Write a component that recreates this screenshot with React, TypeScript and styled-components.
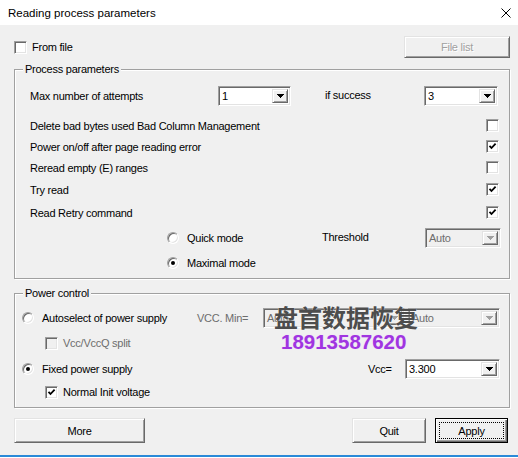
import styled, { createGlobalStyle } from "styled-components"

const GlobalStyle = createGlobalStyle`
  html, body {
    margin: 0;
    padding: 0;
    background: #ffffff;
  }
  body {
    font-family: "Liberation Sans", Arial, sans-serif;
    font-size: 11px;
    letter-spacing: -0.25px;
    color: #000;
  }
  * {
    box-sizing: border-box;
  }
`

const Window = styled.div`
  width: 518px;
  height: 458px;
  display: flex;
  flex-direction: column;
  background: #f0f0f0;
  overflow: hidden;
`

const TitleBar = styled.div`
  flex: none;
  height: 25px;
  background: #ffffff;
  display: flex;
  align-items: center;
  justify-content: space-between;
  padding: 0 7px 0 8px;
  font-size: 11.5px;
  letter-spacing: 0;
`

const Content = styled.div`
  flex: 1;
  display: flex;
  flex-direction: column;
  padding: 11px 8px 0 14px;
`

const BottomEdge = styled.div`
  flex: none;
  height: 3px;
  border-top: 2px solid #2a8ad8;
  background: #ffffff;
`

const TopRow = styled.div`
  height: 22px;
  display: flex;
  align-items: center;
  justify-content: space-between;
`

const Group = styled.div<{ $h: number; $mt: number; $pad: string }>`
  position: relative;
  height: ${(p) => p.$h}px;
  margin-top: ${(p) => p.$mt}px;
  padding: ${(p) => p.$pad};
  border: 1px solid #a0a0a0;
  box-shadow: inset 1px 1px 0 #ffffff, 1px 1px 0 #ffffff;
  display: flex;
  flex-direction: column;
`

const Legend = styled.span`
  position: absolute;
  top: -7px;
  left: 8px;
  padding: 0 2px;
  line-height: 13px;
  background: #f0f0f0;
`

const Row = styled.div<{ $h: number; $mt?: number; $indent?: number }>`
  flex: none;
  display: flex;
  align-items: center;
  height: ${(p) => p.$h}px;
  margin-top: ${(p) => p.$mt ?? 0}px;
  padding-left: ${(p) => p.$indent ?? 0}px;
`

const Cell = styled.span<{ $w?: number; $muted?: boolean; $up?: number }>`
  flex: ${(p) => (p.$w ? "none" : "1")};
  width: ${(p) => (p.$w ? `${p.$w}px` : "auto")};
  display: flex;
  align-items: center;
  gap: 8px;
  white-space: nowrap;
  color: ${(p) => (p.$muted ? "#6d6d6d" : "#000")};
  margin-bottom: ${(p) => (p.$up ?? 0) * 2}px;
`

const CheckLabel = styled.label<{ $muted?: boolean }>`
  display: flex;
  align-items: center;
  gap: 5px;
  white-space: nowrap;
  color: ${(p) => (p.$muted ? "#6d6d6d" : "#000")};
`

const sunken = `
  border: 1px solid;
  border-color: #a0a0a0 #ffffff #ffffff #a0a0a0;
  box-shadow: inset 1px 1px 0 #696969, inset -1px -1px 0 #e3e3e3;
`

const raised = `
  border: 1px solid;
  border-color: #e3e3e3 #696969 #696969 #e3e3e3;
  box-shadow: inset 1px 1px 0 #ffffff, inset -1px -1px 0 #a0a0a0;
`

const Box = styled.span<{ $disabled?: boolean }>`
  flex: none;
  width: 13px;
  height: 13px;
  display: inline-flex;
  align-items: center;
  justify-content: center;
  background: ${(p) => (p.$disabled ? "#f0f0f0" : "#ffffff")};
  ${sunken}
`

const RadioDot = styled.span<{ $checked?: boolean }>`
  flex: none;
  position: relative;
  width: 12px;
  height: 12px;
  border-radius: 50%;
  background: #ffffff;
  ${sunken}

  &::after {
    content: "";
    display: ${(p) => (p.$checked ? "block" : "none")};
    position: absolute;
    left: 3px;
    top: 3px;
    width: 4px;
    height: 4px;
    border-radius: 50%;
    background: #000;
  }
`

const Combo = styled.div<{ $w: number; $disabled?: boolean; $mr?: number }>`
  flex: none;
  width: ${(p) => p.$w}px;
  height: 20px;
  margin-right: ${(p) => p.$mr ?? 0}px;
  display: flex;
  align-items: stretch;
  padding: 2px;
  background: ${(p) => (p.$disabled ? "#f0f0f0" : "#ffffff")};
  ${sunken}
`

const ComboText = styled.span<{ $disabled?: boolean }>`
  flex: 1;
  padding-left: 1px;
  line-height: 14px;
  overflow: hidden;
  color: ${(p) => (p.$disabled ? "#6d6d6d" : "#000")};
`

const DropButton = styled.span`
  flex: none;
  width: 16px;
  display: flex;
  align-items: center;
  justify-content: center;
  background: #f0f0f0;
  ${raised}
`

const Button = styled.button<{ $w: number; $default?: boolean; $h?: number }>`
  flex: none;
  position: relative;
  width: ${(p) => p.$w}px;
  height: ${(p) => p.$h ?? 25}px;
  padding: 0;
  font: inherit;
  letter-spacing: inherit;
  color: ${(p) => (p.disabled ? "#a0a0a0" : "#000")};
  text-shadow: ${(p) => (p.disabled ? "1px 1px 0 #ffffff" : "none")};
  background: #f0f0f0;
  ${(p) =>
    p.$default
      ? `
    border: 1px solid #000;
    box-shadow: inset 1px 1px 0 #ffffff, inset -1px -1px 0 #696969, inset -2px -2px 0 #a0a0a0;
    &::after {
      content: "";
      position: absolute;
      inset: 3px;
      border: 1px dotted #000;
    }
  `
      : raised}
`

const ButtonBar = styled.div`
  display: flex;
  align-items: center;
  margin-top: 10px;
  margin-right: 2px;
  gap: 9px;
`

const Spacer = styled.span`
  flex: 1;
`

const Watermark = styled.span`
  position: absolute;
  left: 259px;
  top: 11px;
  font-family: "Noto Sans CJK SC", sans-serif;
  font-size: 24px;
  font-weight: 700;
  line-height: 1;
  letter-spacing: 0;
  color: #4d4d4d;
  text-shadow: 0 0 1px #ffffff;
  pointer-events: none;
`

const Phone = styled.span`
  position: absolute;
  left: 266px;
  top: 38px;
  font-family: "Liberation Sans", Arial, sans-serif;
  font-size: 20.5px;
  font-weight: 700;
  line-height: 1;
  letter-spacing: 0;
  color: #a035e0;
  text-shadow: 0 0 1px #e8c0ff;
  pointer-events: none;
`

function CloseIcon() {
  return (
    <svg width="10" height="10" viewBox="0 0 10 10">
      <path d="M0.5 0.5 L9.5 9.5 M9.5 0.5 L0.5 9.5" stroke="#000" strokeWidth="1" fill="none" />
    </svg>
  )
}

function Arrow({ disabled }: { disabled?: boolean }) {
  return (
    <svg width="7" height="4" viewBox="0 0 7 4" shapeRendering="crispEdges">
      <polygon points="0,0 7,0 3.5,4" fill={disabled ? "#a0a0a0" : "#000"} />
    </svg>
  )
}

function Check() {
  return (
    <svg width="9" height="9" viewBox="0 0 9 9">
      <polyline points="1.5,3.8 3.5,6 7.6,1.6" stroke="#000" strokeWidth="1.8" fill="none" />
    </svg>
  )
}

function CheckBox({ checked, disabled }: { checked?: boolean; disabled?: boolean }) {
  return <Box $disabled={disabled}>{checked && <Check />}</Box>
}

function ComboBox({ value, w, disabled, mr }: { value: string; w: number; disabled?: boolean; mr?: number }) {
  return (
    <Combo $w={w} $disabled={disabled} $mr={mr}>
      <ComboText $disabled={disabled}>{value}</ComboText>
      <DropButton>
        <Arrow disabled={disabled} />
      </DropButton>
    </Combo>
  )
}

const options = [
  { label: "Delete bad bytes used Bad Column Management", checked: false, mt: 9 },
  { label: "Power on/off after page reading error", checked: true, mt: 0 },
  { label: "Reread empty (E) ranges", checked: false, mt: 0 },
  { label: "Try read", checked: true, mt: 1 },
  { label: "Read Retry command", checked: true, mt: 2 },
]

export default function App() {
  return (
    <>
      <GlobalStyle />
      <Window>
        <TitleBar>
          <span>Reading process parameters</span>
          <CloseIcon />
        </TitleBar>

        <Content>
          <TopRow>
            <CheckLabel>
              <CheckBox />
              From file
            </CheckLabel>
            <Button $w={106} $h={22} disabled>
              File list
            </Button>
          </TopRow>

          <Group $h={210} $mt={11} $pad="15px 10px 0 15px">
            <Legend>Process parameters</Legend>
            <Row $h={21}>
              <Cell $w={188}>Max number of attempts</Cell>
              <ComboBox value="1" w={73} />
              <Cell $w={34} />
              <Cell $w={99} $up={1}>if success</Cell>
              <ComboBox value="3" w={74} />
            </Row>

            {options.map((o) => (
              <Row key={o.label} $h={21} $mt={o.mt}>
                <Cell>{o.label}</Cell>
                <CheckBox checked={o.checked} />
              </Row>
            ))}

            <Row $h={26} $mt={2} $indent={137}>
              <Cell $w={155}>
                <RadioDot />
                Quick mode
              </Cell>
              <Cell $w={103} $up={1.5}>Threshold</Cell>
              <ComboBox value="Auto" w={76} disabled />
            </Row>
            <Row $h={24} $indent={137}>
              <Cell $w={155}>
                <RadioDot $checked />
                Maximal mode
              </Cell>
            </Row>
          </Group>

          <Group $h={115} $mt={14} $pad="12px 9px 0 7px">
            <Legend>Power control</Legend>
            <Row $h={24}>
              <Cell $w={175}>
                <RadioDot />
                Autoselect of power supply
              </Cell>
              <Cell $w={66} $muted>VCC. Min=</Cell>
              <ComboBox value="Auto" w={142} disabled mr={3} />
              <ComboBox value="Auto" w={92} disabled />
            </Row>
            <Row $h={26} $indent={23}>
              <CheckLabel $muted>
                <CheckBox disabled />
                Vcc/VccQ split
              </CheckLabel>
            </Row>
            <Row $h={25}>
              <Cell $w={175}>
                <RadioDot $checked />
                Fixed power supply
              </Cell>
              <Cell $w={171} />
              <Cell $w={37}>Vcc=</Cell>
              <ComboBox value="3.300" w={95} />
            </Row>
            <Row $h={22} $indent={23}>
              <CheckLabel>
                <CheckBox checked />
                Normal Init voltage
              </CheckLabel>
            </Row>
            <Watermark>盘首数据恢复</Watermark>
            <Phone>18913587620</Phone>
          </Group>

          <ButtonBar>
            <Button $w={131}>More</Button>
            <Spacer />
            <Button $w={74}>Quit</Button>
            <Button $w={73} $default>
              Apply
            </Button>
          </ButtonBar>
        </Content>

        <BottomEdge />
      </Window>
    </>
  )
}
